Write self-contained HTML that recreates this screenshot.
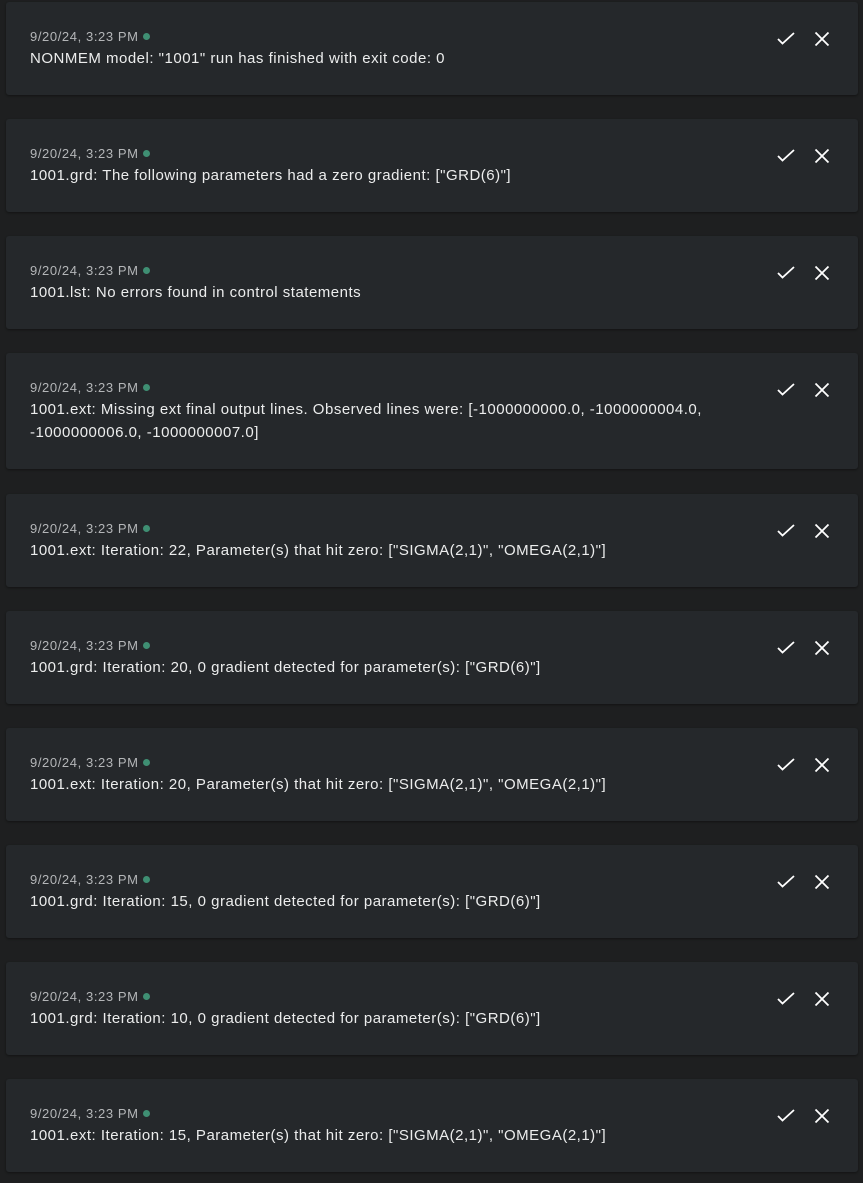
<!DOCTYPE html>
<html><head><meta charset="utf-8"><style>
body{margin:0;background:#1e1f20;width:863px;height:1183px;overflow:hidden;font-family:"Liberation Sans",sans-serif;}
.c{position:absolute;left:6px;width:852px;background:#25282b;border-radius:3px;box-shadow:0 1px 2px rgba(0,0,0,.4);}
.t{position:absolute;left:24px;top:26px;font-size:13px;letter-spacing:.6px;line-height:18px;color:#b4b6b8;}
.t i{display:inline-block;width:7px;height:7px;border-radius:50%;background:#3f8f73;margin-left:4px;vertical-align:1px;}
.m{position:absolute;left:24px;top:45px;width:720px;font-size:15px;letter-spacing:.5px;line-height:23px;color:#eceded;}
.ic{position:absolute;top:27px;left:770px;}
</style></head><body>
<div id="w"></div>
<script>
var d=[
[2,93,'NONMEM model: "1001" run has finished with exit code: 0'],
[119,93,'1001.grd: The following parameters had a zero gradient: ["GRD(6)"]'],
[236,93,'1001.lst: No errors found in control statements'],
[353,116,'1001.ext: Missing ext final output lines. Observed lines were: [-1000000000.0, -1000000004.0,<br>-1000000006.0, -1000000007.0]'],
[494,93,'1001.ext: Iteration: 22, Parameter(s) that hit zero: ["SIGMA(2,1)", "OMEGA(2,1)"]'],
[611,93,'1001.grd: Iteration: 20, 0 gradient detected for parameter(s): ["GRD(6)"]'],
[728,93,'1001.ext: Iteration: 20, Parameter(s) that hit zero: ["SIGMA(2,1)", "OMEGA(2,1)"]'],
[845,93,'1001.grd: Iteration: 15, 0 gradient detected for parameter(s): ["GRD(6)"]'],
[962,93,'1001.grd: Iteration: 10, 0 gradient detected for parameter(s): ["GRD(6)"]'],
[1079,93,'1001.ext: Iteration: 15, Parameter(s) that hit zero: ["SIGMA(2,1)", "OMEGA(2,1)"]']];
var h='';
d.forEach(function(r){h+='<div class="c" style="top:'+r[0]+'px;height:'+r[1]+'px"><div class="t">9/20/24, 3:23 PM<i></i></div><div class="m">'+r[2]+'</div><svg class="ic" width="60" height="20" viewBox="0 0 60 20"><path d="M2 10 L6.5 14.5 L18 4" stroke="#fff" stroke-width="1.8" fill="none"/><path d="M39.5 3.5 L52.5 16.5 M52.5 3.5 L39.5 16.5" stroke="#fff" stroke-width="1.8" fill="none"/></svg></div>';});
document.getElementById('w').innerHTML=h;
</script>
</body></html>
